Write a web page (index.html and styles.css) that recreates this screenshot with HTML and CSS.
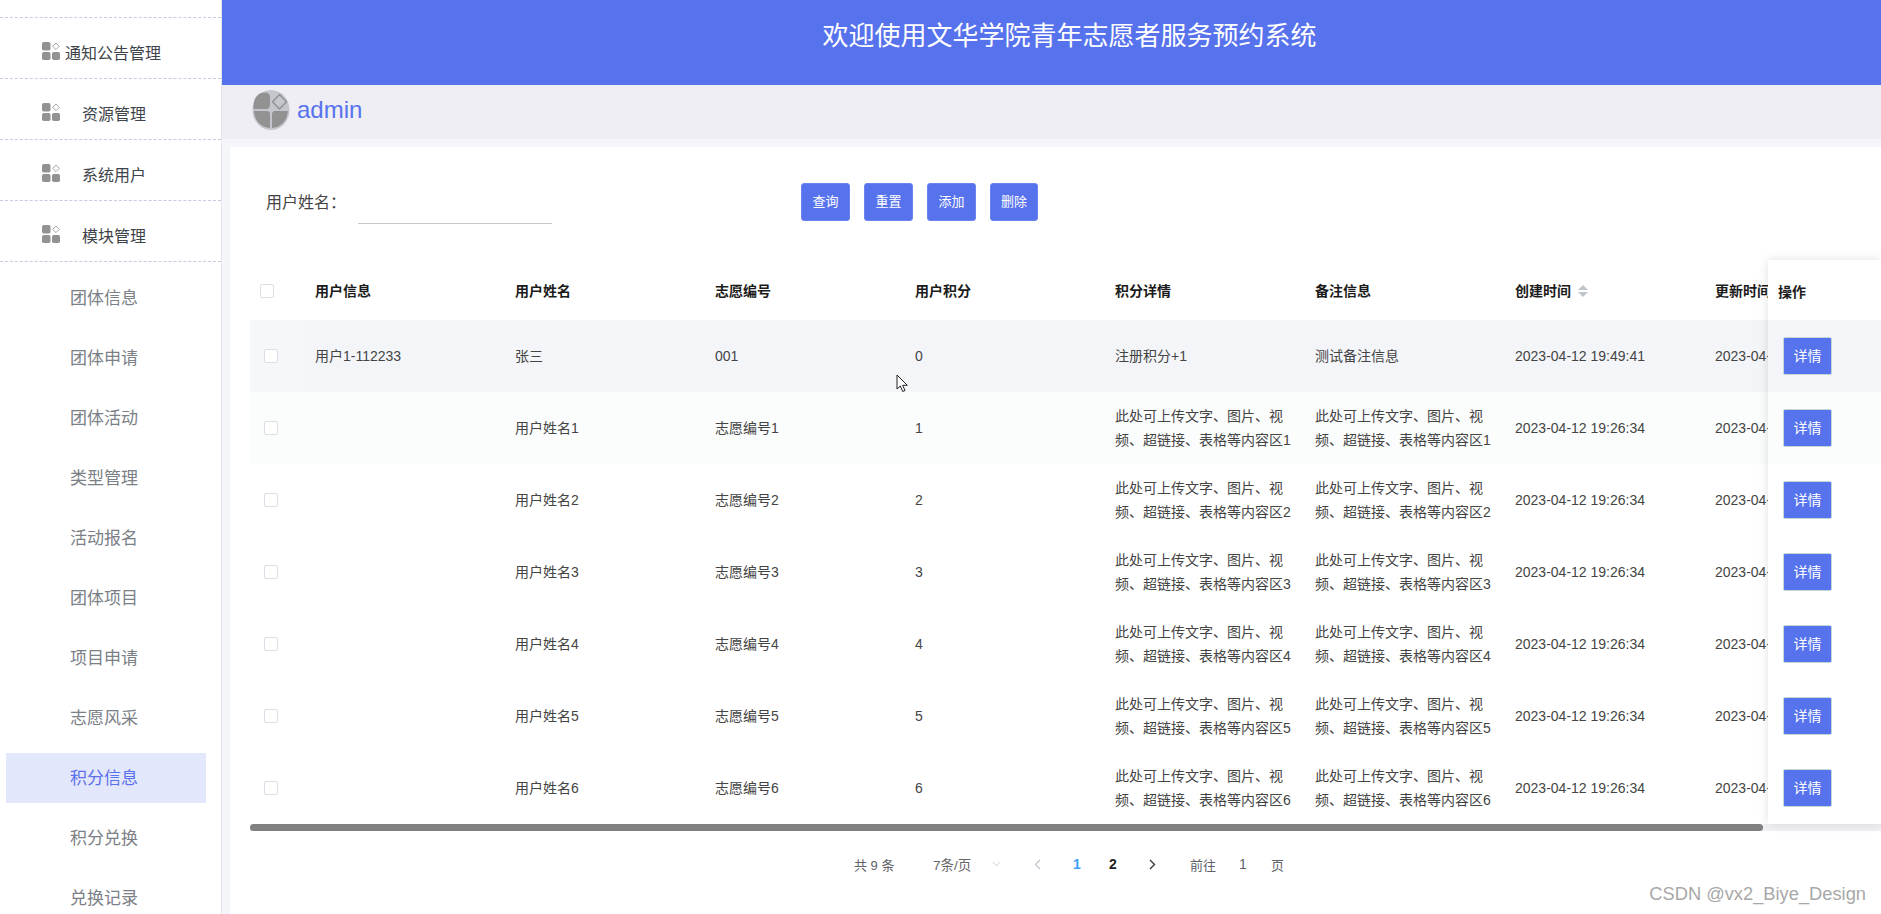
FILE: index.html
```html
<!DOCTYPE html>
<html lang="zh-CN">
<head>
<meta charset="utf-8">
<title>文华学院青年志愿者服务预约系统</title>
<link rel="stylesheet" href="styles.css">
</head>
<body>
<svg class="defs" width="0" height="0" aria-hidden="true">
  <symbol id="grid" viewBox="0 0 18 18">
    <rect x="0" y="0" width="8.500" height="8.500" rx="1.800" fill="#929292"/>
    <rect x="0" y="10" width="8.500" height="8" rx="1.800" fill="#929292"/>
    <rect x="10" y="10" width="8" height="8" rx="1.800" fill="#929292"/>
    <path d="M14 1 L17.300 4.300 L14 7.600 L10.700 4.300 Z" fill="none" stroke="#a5a5a5" stroke-width="1"/>
  </symbol>
</svg>
<aside class="side">
  <div class="group"><svg class="gi"><use href="#grid"/></svg><span class="gt first">通知公告管理</span></div>
  <div class="group"><svg class="gi"><use href="#grid"/></svg><span class="gt">资源管理</span></div>
  <div class="group"><svg class="gi"><use href="#grid"/></svg><span class="gt">系统用户</span></div>
  <div class="group"><svg class="gi"><use href="#grid"/></svg><span class="gt">模块管理</span></div>
  <ul class="sub">
    <li>团体信息</li><li>团体申请</li><li>团体活动</li><li>类型管理</li><li>活动报名</li><li>团体项目</li><li>项目申请</li><li>志愿风采</li>
    <li class="on">积分信息</li><li>积分兑换</li><li>兑换记录</li>
  </ul>
</aside>
<main class="main">
  <header class="top">欢迎使用文华学院青年志愿者服务预约系统</header>
  <div class="user">
    <svg class="avatar" viewBox="0 0 38 40">
      <ellipse cx="19" cy="20" rx="18.500" ry="20" fill="#c3c6cd"/>
      <path d="M1.500 18 C1 8 6 2.500 13 2.500 C16 2.500 18 4 18 7 L18 15 C18 17 16.500 19 14.500 19 L2 19 C1.700 19 1.500 18.500 1.500 18 Z" fill="#929292"/>
      <path d="M2 21 L15 21 C17 21 18 22.500 18 24 L18 38 C9 37.500 2.500 31 2 21 Z" fill="#929292"/>
      <path d="M20 24 C20 22.500 21 21 23 21 L35.800 21 C35.500 30 29 37.500 20 38 Z" fill="#929292"/>
      <path d="M27.500 4.500 L34.500 11.800 L27.500 19 L20.500 11.800 Z" fill="#c3c6cd" stroke="#929292" stroke-width="1.500" stroke-linejoin="round"/>
    </svg>
    <span class="uname">admin</span>
  </div>
  <div class="content">
    <section class="card">
      <form class="search">
        <label class="lab">用户姓名：</label>
        <span class="field"></span>
        <span class="btn">查询</span><span class="btn">重置</span><span class="btn">添加</span><span class="btn narrow">删除</span>
      </form>
      <div class="tablebox">
        <div class="clip">
          <table class="tb">
            <colgroup><col class="c0"><col class="cw"><col class="cw"><col class="cw"><col class="cw"><col class="cw"><col class="cw"><col class="cw"><col class="cw"></colgroup>
            <thead><tr>
              <th class="ck"><i class="box head"></i></th><th>用户信息</th><th>用户姓名</th><th>志愿编号</th><th>用户积分</th><th>积分详情</th><th>备注信息</th>
              <th>创建时间<span class="sort"><i class="up"></i><i class="dn"></i></span></th><th>更新时间</th>
            </tr></thead>
            <tbody>
              <tr class="hot"><td class="ck"><i class="box row"></i></td><td>用户1-112233</td><td>张三</td><td>001</td><td>0</td><td>注册积分+1</td><td>测试备注信息</td><td>2023-04-12 19:49:41</td><td>2023-04-12 19:49:41</td></tr>
              <tr class="soft"><td class="ck"><i class="box row"></i></td><td></td><td>用户姓名1</td><td>志愿编号1</td><td>1</td><td>此处可上传文字、图片、视频、超链接、表格等内容区1</td><td>此处可上传文字、图片、视频、超链接、表格等内容区1</td><td>2023-04-12 19:26:34</td><td>2023-04-12 19:26:34</td></tr>
              <tr><td class="ck"><i class="box row"></i></td><td></td><td>用户姓名2</td><td>志愿编号2</td><td>2</td><td>此处可上传文字、图片、视频、超链接、表格等内容区2</td><td>此处可上传文字、图片、视频、超链接、表格等内容区2</td><td>2023-04-12 19:26:34</td><td>2023-04-12 19:26:34</td></tr>
              <tr><td class="ck"><i class="box row"></i></td><td></td><td>用户姓名3</td><td>志愿编号3</td><td>3</td><td>此处可上传文字、图片、视频、超链接、表格等内容区3</td><td>此处可上传文字、图片、视频、超链接、表格等内容区3</td><td>2023-04-12 19:26:34</td><td>2023-04-12 19:26:34</td></tr>
              <tr><td class="ck"><i class="box row"></i></td><td></td><td>用户姓名4</td><td>志愿编号4</td><td>4</td><td>此处可上传文字、图片、视频、超链接、表格等内容区4</td><td>此处可上传文字、图片、视频、超链接、表格等内容区4</td><td>2023-04-12 19:26:34</td><td>2023-04-12 19:26:34</td></tr>
              <tr><td class="ck"><i class="box row"></i></td><td></td><td>用户姓名5</td><td>志愿编号5</td><td>5</td><td>此处可上传文字、图片、视频、超链接、表格等内容区5</td><td>此处可上传文字、图片、视频、超链接、表格等内容区5</td><td>2023-04-12 19:26:34</td><td>2023-04-12 19:26:34</td></tr>
              <tr><td class="ck"><i class="box row"></i></td><td></td><td>用户姓名6</td><td>志愿编号6</td><td>6</td><td>此处可上传文字、图片、视频、超链接、表格等内容区6</td><td>此处可上传文字、图片、视频、超链接、表格等内容区6</td><td>2023-04-12 19:26:34</td><td>2023-04-12 19:26:34</td></tr>
            </tbody>
          </table>
        </div>
        <div class="track"><div class="thumb"></div></div>
        <div class="fixed">
          <div class="fh">操作</div>
          <div class="fr hot"><span class="detail">详情</span></div>
          <div class="fr soft"><span class="detail">详情</span></div>
          <div class="fr"><span class="detail">详情</span></div>
          <div class="fr"><span class="detail">详情</span></div>
          <div class="fr"><span class="detail">详情</span></div>
          <div class="fr"><span class="detail">详情</span></div>
          <div class="fr"><span class="detail">详情</span></div>
        </div>
      </div>
      <nav class="pager">
        <span class="total">共 9 条</span>
        <span class="size">7条/页</span>
        <svg class="ch down" viewBox="0 0 10 6"><path d="M1 1 L5 5 L9 1" fill="none" stroke="#c0c4cc" stroke-width="1"/></svg>
        <svg class="ch prev" viewBox="0 0 7 11"><path d="M6 1 L1.500 5.500 L6 10" fill="none" stroke="#c0c4cc" stroke-width="1.300"/></svg>
        <b class="pg cur">1</b>
        <b class="pg two">2</b>
        <svg class="ch next" viewBox="0 0 7 11"><path d="M1 1 L5.500 5.500 L1 10" fill="none" stroke="#333" stroke-width="1.300"/></svg>
        <span class="goto">前往</span>
        <span class="gonum">1</span>
        <span class="gopage">页</span>
      </nav>
    </section>
  </div>
</main>
<svg class="cursor" viewBox="0 0 13 19"><path d="M1 1 L1 15 L4.300 12 L6.700 17.500 L9 16.500 L6.600 11.300 L11.300 11.300 Z" fill="#fff" stroke="#222" stroke-width="1"/></svg>
<div class="mark">CSDN @vx2_Biye_Design</div>
</body>
</html>
```
FILE: styles.css
```css
* { box-sizing: border-box; }
html, body { margin: 0; height: 914px; overflow: hidden; }
body {
  display: flex;
  position: relative;
  font-family: "Liberation Sans", "Noto Sans CJK SC", sans-serif;
  background: #f5f6fa;
  color: #444;
}
.defs { position: absolute; }

.side {
  width: 222px;
  flex: none;
  height: 914px;
  padding-top: 17px;
  overflow: hidden;
  background: #fff;
  border-right: 1px solid #e6e6ee;
}
.group {
  height: 61px;
  display: flex;
  align-items: center;
  padding: 7px 0 0 42px;
  border-top: 1px dashed #c6cbe0;
  font-size: 16px;
  color: #3e434a;
}
.group:nth-of-type(4) { height: 62px; border-bottom: 1px dashed #c6cbe0; }
.gi { width: 18px; height: 18px; flex: none; margin-top: -2px; }
.gt { margin-left: 22px; }
.gt.first { margin-left: 5px; }
.sub { list-style: none; margin: 11px 0 0 6px; padding: 0; }
.sub li {
  width: 200px;
  height: 50px;
  line-height: 52px;
  margin-bottom: 10px;
  padding-left: 64px;
  font-size: 17px;
  color: #7b8086;
}
.sub li.on { background: #e3e7fb; color: #5a70ec; }

.main { flex: 1; min-width: 0; display: flex; flex-direction: column; }
.top {
  height: 85px;
  flex: none;
  padding: 0 0 18px 36px;
  display: flex;
  align-items: center;
  justify-content: center;
  background: #5772ed;
  color: #fff;
  font-size: 26px;
}
.user {
  height: 54px;
  flex: none;
  display: flex;
  align-items: center;
  padding: 0 0 5px 30px;
  background: #eeeef4;
}
.avatar { width: 38px; height: 40px; flex: none; }
.uname { margin-left: 7px; font-size: 24px; color: #5772ed; }

.content { flex: 1; padding: 8px 0 0 8px; min-height: 0; }
.card { height: 767px; background: #fff; overflow: hidden; }
.search {
  display: flex;
  align-items: flex-start;
  height: 113px;
  padding: 36px 0 0 36px;
}
.lab { width: 92px; flex: none; font-size: 16px; line-height: 39px; color: #444; }
.field { width: 194px; height: 41px; flex: none; border-bottom: 1px solid #c9c9c9; margin-right: 249px; }
.btn {
  width: 49px;
  height: 38px;
  flex: none;
  margin-right: 14px;
  line-height: 36px;
  text-align: center;
  font-size: 13px;
  color: #fff;
  background: #5772ed;
  border: 1px solid #6d84ee;
  border-radius: 3px;
}
.btn.narrow { width: 48px; }

.tablebox { position: relative; margin-left: 20px; }
.clip { height: 564px; overflow: hidden; }
.tb { table-layout: fixed; width: 1655px; border-collapse: collapse; font-size: 14px; }
.c0 { width: 55px; }
.cw { width: 200px; }
.tb th {
  height: 60px;
  padding: 0 10px;
  text-align: left;
  font-weight: 700;
  color: #1b1b1b;
}
.tb td { height: 72px; padding: 0 10px; line-height: 24px; color: #444; }
.tb .ck { padding-left: 10px; padding-right: 0; }
.box {
  display: block;
  width: 14px;
  height: 14px;
  background: #fff;
  border: 1px solid #dcdfe6;
  border-radius: 2px;
}
.box.head { margin-top: 2px; }
.box.row { margin-left: 4px; }
.hot { background: #f3f5f9; }
.hot .ck { background: #f6f7fa; }
.soft { background: #fbfcfc; }
.sort {
  display: inline-flex;
  flex-direction: column;
  gap: 2px;
  margin: 0 0 3px 7px;
  vertical-align: middle;
}
.up, .dn { width: 0; height: 0; border: 5px solid transparent; }
.up { border-top: 0; border-bottom: 5px solid #c0c4cc; }
.dn { border-bottom: 0; border-top: 5px solid #c0c4cc; }

.track { height: 7px; background: #f1f1f5; }
.thumb { width: 1513px; height: 7px; background: #808080; border-radius: 4px; }

.fixed {
  position: absolute;
  top: 0;
  right: 0;
  width: 113px;
  height: 564px;
  background: #fff;
  box-shadow: 0 0 10px rgba(0, 0, 0, .12);
}
.fh {
  height: 60px;
  padding: 2px 0 0 10px;
  display: flex;
  align-items: center;
  font-size: 14px;
  font-weight: 700;
  color: #1b1b1b;
}
.fr { height: 72px; padding-left: 15px; display: flex; align-items: center; background: #fff; }
.fr.hot { background: #f3f5f9; }
.fr.soft { background: #fbfcfc; }
.detail {
  width: 49px;
  height: 38px;
  line-height: 36px;
  text-align: center;
  font-size: 14px;
  color: #fff;
  background: #5772ed;
  border: 1px solid #c4d6d8;
  border-radius: 2px;
}

.pager {
  display: flex;
  align-items: center;
  height: 66px;
  padding-left: 624px;
  font-size: 13px;
  color: #606266;
}
.total { width: 79px; }
.size { width: 59px; font-size: 13.5px; color: #666; }
.ch { flex: none; }
.down { width: 9px; height: 6px; margin-right: 33px; }
.prev { width: 7px; height: 11px; margin-right: 31px; }
.pg { width: 10px; font-size: 14px; text-align: center; }
.cur { color: #409eff; margin-right: 26px; }
.two { color: #222; margin-right: 31px; }
.next { width: 7px; height: 11px; margin-right: 34px; }
.goto { width: 49px; }
.gonum { width: 32px; font-size: 14px; }
.cursor { position: absolute; left: 896px; top: 374px; width: 13px; height: 19px; }
.mark {
  position: absolute;
  right: 15px;
  top: 883px;
  font-size: 18.3px;
  color: #a8a8a8;
}
```
